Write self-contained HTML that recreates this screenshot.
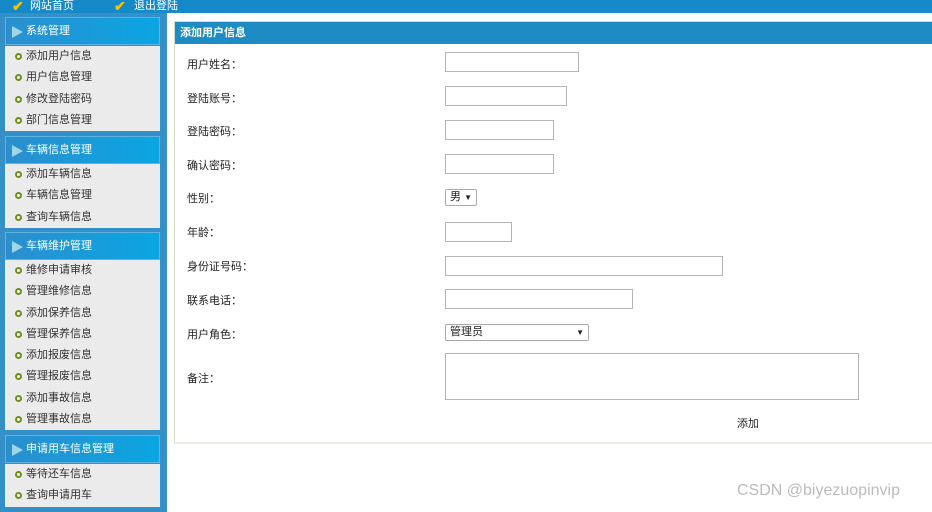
<!DOCTYPE html>
<html><head><meta charset="utf-8">
<style>
*,*::before,*::after{margin:0;padding:0;box-sizing:border-box}
body{width:932px;height:512px;overflow:hidden;background:#fff;position:relative;font-family:"Liberation Sans","Noto Sans CJK SC",sans-serif;font-size:11px;color:#222}
.top{position:absolute;left:0;top:0;width:932px;height:13px;background:#1689c8;color:#fff;font-size:11px;line-height:12px}
.top span{position:absolute;top:0}
.chk{color:#f5c400;font-weight:bold;font-size:14px;line-height:12px}
.side{position:absolute;left:0;top:13px;width:167px;height:499px;background:#3590c8}
.h{position:absolute;left:5px;width:155px;height:28px;background:linear-gradient(90deg,#2b8fcf,#0aa5e2);border:1px solid #5cb3e3;color:#fff;font-size:11px;line-height:26px;padding-left:20px}
.h:before{content:"";position:absolute;left:6px;top:8px;border-left:11px solid #9fd6e3;border-top:6px solid transparent;border-bottom:6px solid transparent}
.m{position:absolute;left:5px;width:155px;background:#ebebeb}
.m div{height:21.3px;line-height:21px;padding-left:21px;position:relative;color:#333}
.m div:before{content:"";position:absolute;left:10px;top:7px;width:7px;height:7px;border-radius:50%;border:2px solid #6d8e1f;background:#fff}
.panel{position:absolute;left:174px;top:21px;width:760px;height:423px;border:1px solid #d6dec0;border-bottom:2px solid #ececdf}
.ph{height:22px;background:#1e8bc3;color:#fff;font-weight:bold;line-height:22px;padding-left:5px}
.l{position:absolute;left:187px;font-size:11px}
.i{position:absolute;left:445px;height:20px;border:1px solid #b4b4b4;background:#fff}
.s{position:absolute;left:445px;height:17px;border:1px solid #aaa;border-radius:2px;background:#fff;font-size:11px;line-height:15px;padding-left:4px}
.s:after{content:"▼";position:absolute;right:4px;top:0;font-size:8px}
</style></head><body>
<div class="top"><span class="chk" style="left:12px">✔</span><span style="left:30px">网站首页</span><span class="chk" style="left:114px">✔</span><span style="left:134px">退出登陆</span></div>
<div class="side">
<div class="h" style="top:4px">系统管理</div>
<div class="m" style="top:33px"><div>添加用户信息</div><div>用户信息管理</div><div>修改登陆密码</div><div>部门信息管理</div></div>
<div class="h" style="top:123px">车辆信息管理</div>
<div class="m" style="top:151px"><div>添加车辆信息</div><div>车辆信息管理</div><div>查询车辆信息</div></div>
<div class="h" style="top:219px">车辆维护管理</div>
<div class="m" style="top:247px"><div>维修申请审核</div><div>管理维修信息</div><div>添加保养信息</div><div>管理保养信息</div><div>添加报废信息</div><div>管理报废信息</div><div>添加事故信息</div><div>管理事故信息</div></div>
<div class="h" style="top:422px">申请用车信息管理</div>
<div class="m" style="top:451px"><div>等待还车信息</div><div>查询申请用车</div></div>
</div>
<div class="panel"><div class="ph">添加用户信息</div></div>
<div class="l" style="top:56px">用户姓名：</div>
<div class="l" style="top:90px">登陆账号：</div>
<div class="l" style="top:123px">登陆密码：</div>
<div class="l" style="top:157px">确认密码：</div>
<div class="l" style="top:190px">性别：</div>
<div class="l" style="top:224px">年龄：</div>
<div class="l" style="top:258px">身份证号码：</div>
<div class="l" style="top:292px">联系电话：</div>
<div class="l" style="top:326px">用户角色：</div>
<div class="l" style="top:370px">备注：</div>
<div class="i" style="top:52px;width:134px"></div>
<div class="i" style="top:86px;width:122px"></div>
<div class="i" style="top:120px;width:109px"></div>
<div class="i" style="top:154px;width:109px"></div>
<div class="s" style="top:189px;width:32px">男</div>
<div class="i" style="top:222px;width:67px"></div>
<div class="i" style="top:256px;width:278px"></div>
<div class="i" style="top:289px;width:188px"></div>
<div class="s" style="top:324px;width:144px">管理员</div>
<div class="i" style="top:353px;width:414px;height:47px"></div>
<div style="position:absolute;left:737px;top:415px">添加</div>
<div style="position:absolute;left:737px;top:482px;font-size:16px;color:#bbb;font-family:'Liberation Sans',sans-serif">CSDN @biyezuopinvip</div>
</body></html>
